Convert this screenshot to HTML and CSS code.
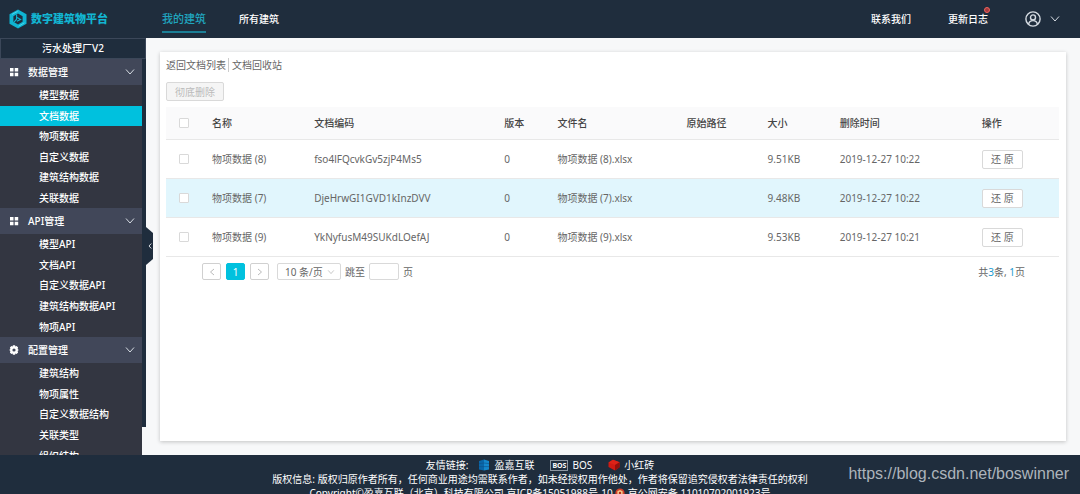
FILE: index.html
```html
<!DOCTYPE html>
<html lang="zh-CN">
<head>
<meta charset="utf-8">
<title>数字建筑物平台</title>
<link rel="stylesheet" href="styles.css">
</head>
<body>
<div class="app">
  <header class="topbar">
    <a class="brand" href="#">
      <svg class="brand-mark" viewBox="0 0 18 20" aria-hidden="true">
        <path d="M9 0.5 17.500 5.200v9.600L9 19.500 .5 14.800V5.200z" fill="#0fb4d2"/>
        <path d="M9 4.600 13.600 7.300v5.400L9 15.400 4.400 12.700V7.300z" fill="#1f2d3d"/>
        <path d="M7.600 5.400v4.800l-2.600 3M7.600 8.200l4 2.200-3.800 1.800" fill="none" stroke="#0fb4d2" stroke-width="1.100"/>
        <path d="M3 5.400 8.600 2.400M15.400 13.800 9.600 17.200" stroke="#45d6ec" stroke-width="1"/>
      </svg>
      <span>数字建筑物平台</span>
    </a>
    <nav class="tabs">
      <a class="tab tab-active" href="#">我的建筑</a>
      <a class="tab" href="#">所有建筑</a>
    </nav>
    <nav class="tools">
      <a class="tool" href="#">联系我们</a>
      <a class="tool" href="#">更新日志<span class="dot"></span></a>
      <button class="user" type="button" aria-label="用户">
        <svg class="avatar" viewBox="0 0 16 16" aria-hidden="true"><g fill="none" stroke="#d5dbe2" stroke-width="1.400"><circle cx="8" cy="8" r="7.100"/><circle cx="8" cy="6.400" r="2.500"/><path d="M3.600 13.200c.5-2.600 2.300-3.600 4.400-3.600s3.900 1 4.400 3.600"/></g></svg>
        <svg class="chevron" viewBox="0 0 10 10" aria-hidden="true"><path d="M1 2.500 5 7l4-4.500"/></svg>
      </button>
    </nav>
  </header>

  <div class="body">
    <aside class="sidebar">
      <div class="project">污水处理厂V2</div>
      <nav class="menu">
        <button class="group" type="button">
          <svg class="group-icon" viewBox="0 0 10 10" aria-hidden="true"><path d="M1 1h3.500v3.500H1zM5.700 1h3.500v3.500H5.700zM1 5.700h3.500v3.500H1zM5.700 5.700h3.500v3.500H5.700z" fill="#fff"/></svg>
          <span>数据管理</span>
          <svg class="chevron" viewBox="0 0 10 10" aria-hidden="true"><path d="M1 2.500 5 7l4-4.500"/></svg>
        </button>
        <ul class="submenu submenu-six">
          <li><a href="#">模型数据</a></li>
          <li><a class="current" href="#">文档数据</a></li>
          <li><a href="#">物项数据</a></li>
          <li><a href="#">自定义数据</a></li>
          <li><a href="#">建筑结构数据</a></li>
          <li><a href="#">关联数据</a></li>
        </ul>
        <button class="group" type="button">
          <svg class="group-icon" viewBox="0 0 10 10" aria-hidden="true"><path d="M1 1h3.500v3.500H1zM5.700 1h3.500v3.500H5.700zM1 5.700h3.500v3.500H1zM5.700 5.700h3.500v3.500H5.700z" fill="#fff"/></svg>
          <span>API管理</span>
          <svg class="chevron" viewBox="0 0 10 10" aria-hidden="true"><path d="M1 2.500 5 7l4-4.500"/></svg>
        </button>
        <ul class="submenu">
          <li><a href="#">模型API</a></li>
          <li><a href="#">文档API</a></li>
          <li><a href="#">自定义数据API</a></li>
          <li><a href="#">建筑结构数据API</a></li>
          <li><a href="#">物项API</a></li>
        </ul>
        <button class="group" type="button">
          <svg class="group-icon" viewBox="0 0 10 10" aria-hidden="true"><path d="M3.900.3h2.200l.3 1.200 1.200-.4 1.500 1.500-.5 1.300 1.200 1.100-1.200 1.100.5 1.300-1.500 1.500-1.200-.4-.3 1.200H3.900l-.3-1.200-1.200.4L.9 7.400l.5-1.300L.2 5l1.200-1.100L.9 2.600l1.500-1.500 1.200.4zM5 3.400a1.600 1.600 0 1 0 0 3.200 1.600 1.600 0 0 0 0-3.200z" fill="#fff" fill-rule="evenodd"/></svg>
          <span>配置管理</span>
          <svg class="chevron" viewBox="0 0 10 10" aria-hidden="true"><path d="M1 2.500 5 7l4-4.500"/></svg>
        </button>
        <ul class="submenu">
          <li><a href="#">建筑结构</a></li>
          <li><a href="#">物项属性</a></li>
          <li><a href="#">自定义数据结构</a></li>
          <li><a href="#">关联类型</a></li>
          <li><a href="#">组织结构</a></li>
        </ul>
      </nav>
      <button class="fold" type="button" aria-label="收起菜单">
        <svg viewBox="0 0 4 6" aria-hidden="true"><path d="M3.300.5 1 3l2.300 2.500" fill="none" stroke="#e6eaee" stroke-width=".9"/></svg>
      </button>
    </aside>

    <main class="main">
      <section class="card">
        <nav class="crumbs"><a href="#">返回文档列表</a><a href="#">文档回收站</a></nav>
        <button class="purge" type="button" disabled>彻底删除</button>
        <table class="docs">
          <colgroup><col class="c-check"><col class="c-name"><col class="c-code"><col class="c-ver"><col class="c-file"><col class="c-path"><col class="c-size"><col class="c-time"><col class="c-act"></colgroup>
          <thead>
            <tr><th class="pick"><input type="checkbox" aria-label="全选"></th><th>名称</th><th>文档编码</th><th>版本</th><th>文件名</th><th>原始路径</th><th>大小</th><th>删除时间</th><th>操作</th></tr>
          </thead>
          <tbody>
            <tr><td class="pick"><input type="checkbox" aria-label="选择 8"></td><td>物项数据 (8)</td><td>fso4lFQcvkGv5zjP4Ms5</td><td>0</td><td>物项数据 (8).xlsx</td><td></td><td>9.51KB</td><td>2019-12-27 10:22</td><td><button class="restore" type="button">还 原</button></td></tr>
            <tr class="hovered"><td class="pick"><input type="checkbox" aria-label="选择 7"></td><td>物项数据 (7)</td><td>DjeHrwGI1GVD1kInzDVV</td><td>0</td><td>物项数据 (7).xlsx</td><td></td><td>9.48KB</td><td>2019-12-27 10:22</td><td><button class="restore" type="button">还 原</button></td></tr>
            <tr><td class="pick"><input type="checkbox" aria-label="选择 9"></td><td>物项数据 (9)</td><td>YkNyfusM49SUKdLOefAJ</td><td>0</td><td>物项数据 (9).xlsx</td><td></td><td>9.53KB</td><td>2019-12-27 10:21</td><td><button class="restore" type="button">还 原</button></td></tr>
          </tbody>
        </table>
        <div class="pager">
          <div class="pages">
            <button class="page" type="button" aria-label="上一页"><svg viewBox="0 0 6 8" aria-hidden="true"><path d="M5 1 1.500 4 5 7"/></svg></button>
            <button class="page page-current" type="button">1</button>
            <button class="page" type="button" aria-label="下一页"><svg viewBox="0 0 6 8" aria-hidden="true"><path d="M1 1l3.500 3L1 7"/></svg></button>
          </div>
          <div class="size">
            <select aria-label="每页条数"><option>10 条/页</option></select>
            <svg viewBox="0 0 10 10" aria-hidden="true"><path d="M1.500 3 5 7l3.500-4"/></svg>
          </div>
          <label class="jump">跳至<input type="text">页</label>
          <p class="total">共<b>3</b>条, <b>1</b>页</p>
        </div>
      </section>
    </main>
  </div>

  <footer class="footer">
    <div class="links">
      <span class="links-title">友情链接:</span>
      <a href="#"><svg viewBox="0 0 12 12" aria-hidden="true"><path d="M1 2 6 .6v11L1 10.400z" fill="#0a66a8"/><path d="M6 .6 11 2v8.400L6 11.600z" fill="#1587cc"/><path d="M1 4.600 6 4l5 .6M1 7.600h10" stroke="#0d4f86" stroke-width=".6" fill="none"/></svg>盈嘉互联</a>
      <a href="#"><span class="i-bos">BOS</span>BOS</a>
      <a href="#"><svg viewBox="0 0 12 12" aria-hidden="true"><path d="M.5 3.500 5 .8l6.500 2.400v5L7 11.400.5 8z" fill="#d01a13"/><path d="M.5 3.500 5 .8l6.500 2.400L7 6z" fill="#dc2318"/><path d="M7 6l4.500-2.800v5L7 11.400z" fill="#92100c"/></svg>小红砖</a>
    </div>
    <p>版权信息: 版权归原作者所有，任何商业用途均需联系作者，如未经授权用作他处，作者将保留追究侵权者法律责任的权利</p>
    <p>Copyright©盈嘉互联（北京）科技有限公司 京ICP备15051988号-10 <svg class="i-badge" viewBox="0 0 10 10" aria-hidden="true"><circle cx="5" cy="5" r="4.600" fill="#d5402b"/><path d="M5 2 7.600 3.200v2.600L5 8 2.400 5.800V3.200z" fill="#f3c98b"/><circle cx="5" cy="5" r="1.200" fill="#b52a1c"/></svg> 京公网安备 11010702001923号</p>
  </footer>
  <div class="watermark">https://blog.csdn.net/boswinner</div>
</div>
</body>
</html>
```

FILE: styles.css
```css
* { box-sizing: border-box; }

body {
  margin: 0;
  font: 10px/14px "Noto Sans", "Noto Sans CJK SC", sans-serif;
  color: #666;
}

a { color: inherit; text-decoration: none; }
p, ul { margin: 0; padding: 0; list-style: none; }
button, input, select { font: inherit; color: inherit; margin: 0; padding: 0; }
button { border: 0; background: none; }

.app {
  position: relative;
  display: flex;
  flex-direction: column;
  height: 100vh;
  overflow: hidden;
  background: #f7f8f9;
}

/* top bar */
.topbar {
  display: flex;
  flex: none;
  height: 38px;
  background: #1f2d3d;
  color: #fff;
  font-weight: 500;
}
.brand {
  display: flex;
  align-items: center;
  gap: 4px;
  width: 162px;
  padding-left: 9px;
  color: #12b5d2;
  font-size: 11px;
  font-weight: 900;
}
.brand-mark { width: 18px; height: 20px; }
.tabs { display: flex; gap: 33px; }
.tab {
  margin-bottom: 5px;
  padding-top: 12px;
  border-bottom: 2px solid transparent;
}
.tab-active {
  border-color: #1c7f96;
  color: #1fa5bf;
  font-size: 11px;
}
.tools {
  display: flex;
  align-items: center;
  gap: 37px;
  margin-left: auto;
  padding-right: 20px;
}
.tool { position: relative; }
.dot {
  position: absolute;
  top: -5px;
  right: -2px;
  width: 6px;
  height: 6px;
  border: 1px solid #f0645c;
  border-radius: 50%;
  background: #a33a3e;
}
.user { display: flex; align-items: center; gap: 9px; }
.avatar { width: 16px; height: 16px; }
.chevron { width: 10px; height: 10px; fill: none; stroke: #d5dbe2; stroke-width: 1; }

/* sidebar */
.body { display: flex; flex: 1; min-height: 0; }
.sidebar {
  position: relative;
  display: flex;
  flex: none;
  flex-direction: column;
  width: 146px;
  color: #fff;
  font-weight: 500;
  background: linear-gradient(#1f2d3d, #1f2d3d) no-repeat 0 0 / 100% calc(100% - 28px);
}
.project {
  flex: none;
  height: 21px;
  border: 1px solid #3b4759;
  line-height: 19px;
  text-align: center;
}
.menu {
  flex: 1;
  width: 142px;
  min-height: 0;
  overflow: hidden;
  background: #333641;
}
.group {
  display: flex;
  align-items: center;
  gap: 9px;
  width: 100%;
  height: 26px;
  padding: 0 7px 0 9px;
  background: #414759;
}
.group-icon { width: 10px; height: 10px; }
.group .chevron { margin-left: auto; }
.submenu { display: grid; grid-auto-rows: 1fr; min-height: 103px; }
.submenu-six { min-height: 123px; }
.submenu a {
  display: flex;
  align-items: center;
  height: 100%;
  padding-left: 39px;
}
.submenu .current { background: #00c1de; }
.fold {
  position: absolute;
  top: 189px;
  left: 100%;
  display: grid;
  place-items: center;
  width: 7px;
  height: 38px;
  background: #1f2d3d;
  clip-path: polygon(0 0, 100% 16%, 100% 84%, 0 100%);
}
.fold svg { width: 4px; height: 6px; }

/* content */
.main { flex: 1; min-width: 0; padding: 14px; }
.card {
  height: 100%;
  padding: 6px 7px 6px 6px;
  background: #fff;
  box-shadow: 0 1px 4px rgba(0, 0, 0, .22);
}
.crumbs { display: flex; }
.crumbs a + a { margin-left: 2px; padding-left: 3px; border-left: 1px solid #ccc; }
.purge {
  display: block;
  height: 19px;
  margin: 10px 0 6px;
  padding: 0 8px;
  border: 1px solid #d9d9d9;
  border-radius: 2px;
  background: #f5f5f5;
  color: #bbb;
}
.docs {
  width: 100%;
  table-layout: fixed;
  border-spacing: 0;
}
.c-check { width: 38px; }
.c-name { width: 102px; }
.c-code { width: 190px; }
.c-ver { width: 53px; }
.c-file { width: 129px; }
.c-path { width: 81px; }
.c-size { width: 72px; }
.c-time { width: 142px; }
.c-act { width: 85px; }
.docs th, .docs td {
  height: 39px;
  padding: 0 8px;
  border-bottom: 1px solid #e8e8e8;
  text-align: left;
  white-space: nowrap;
}
.docs th {
  height: 33px;
  background: #fafafb;
  color: #444;
  font-weight: 500;
}
.docs .hovered { background: #e1f6fd; }
.docs .pick { padding: 0 0 0 13px; }
.pick input {
  display: block;
  appearance: none;
  width: 10px;
  height: 10px;
  border: 1px solid #d9d9d9;
  border-radius: 1px;
  background: #fff;
}
.restore {
  display: block;
  width: 41px;
  height: 19px;
  border: 1px solid #d9d9d9;
  border-radius: 2px;
  background: #fff;
}

/* pagination */
.pager {
  display: flex;
  align-items: center;
  padding: 6px 34px 0 36px;
}
.pages { display: flex; gap: 5px; }
.page {
  display: grid;
  place-items: center;
  width: 19px;
  height: 17px;
  border: 1px solid #d0d0d0;
  border-radius: 2px;
  background: #fff;
}
.page svg { width: 6px; height: 8px; fill: none; stroke: #bbb; }
.page-current { border-color: #00c1de; background: #00c1de; color: #fff; }
.size { position: relative; margin: 0 4px 0 8px; }
.size select {
  display: block;
  appearance: none;
  width: 64px;
  height: 17px;
  padding-left: 7px;
  border: 1px solid #d9d9d9;
  border-radius: 2px;
  background: #fff;
}
.size svg {
  position: absolute;
  top: 5px;
  right: 6px;
  width: 8px;
  height: 8px;
  fill: none;
  stroke: #bbb;
  pointer-events: none;
}
.jump { display: flex; align-items: center; gap: 4px; }
.jump input {
  width: 30px;
  height: 17px;
  border: 1px solid #d9d9d9;
  border-radius: 2px;
}
.total { margin-left: auto; }
.total b { color: #1a9ad0; font-weight: 400; }

/* footer */
.footer {
  flex: none;
  height: 39px;
  padding-top: 3px;
  overflow: hidden;
  background: #1f2d3d;
  color: #fff;
  text-align: center;
  white-space: nowrap;
}
.links {
  display: flex;
  justify-content: center;
  gap: 16px;
  height: 14px;
}
.links-title { margin-right: -6px; }
.links a { display: flex; align-items: center; gap: 4px; }
.links svg { width: 12px; height: 12px; }
.i-bos {
  padding: 0 1px;
  border: 1px solid #8c96a1;
  font-size: 7px;
  font-weight: 700;
  line-height: 9px;
}
.i-badge { width: 10px; height: 10px; vertical-align: -1px; }
.watermark {
  position: absolute;
  right: 11px;
  bottom: 10px;
  color: #adb4bb;
  font: 16px/20px "Liberation Sans", sans-serif;
}
```
